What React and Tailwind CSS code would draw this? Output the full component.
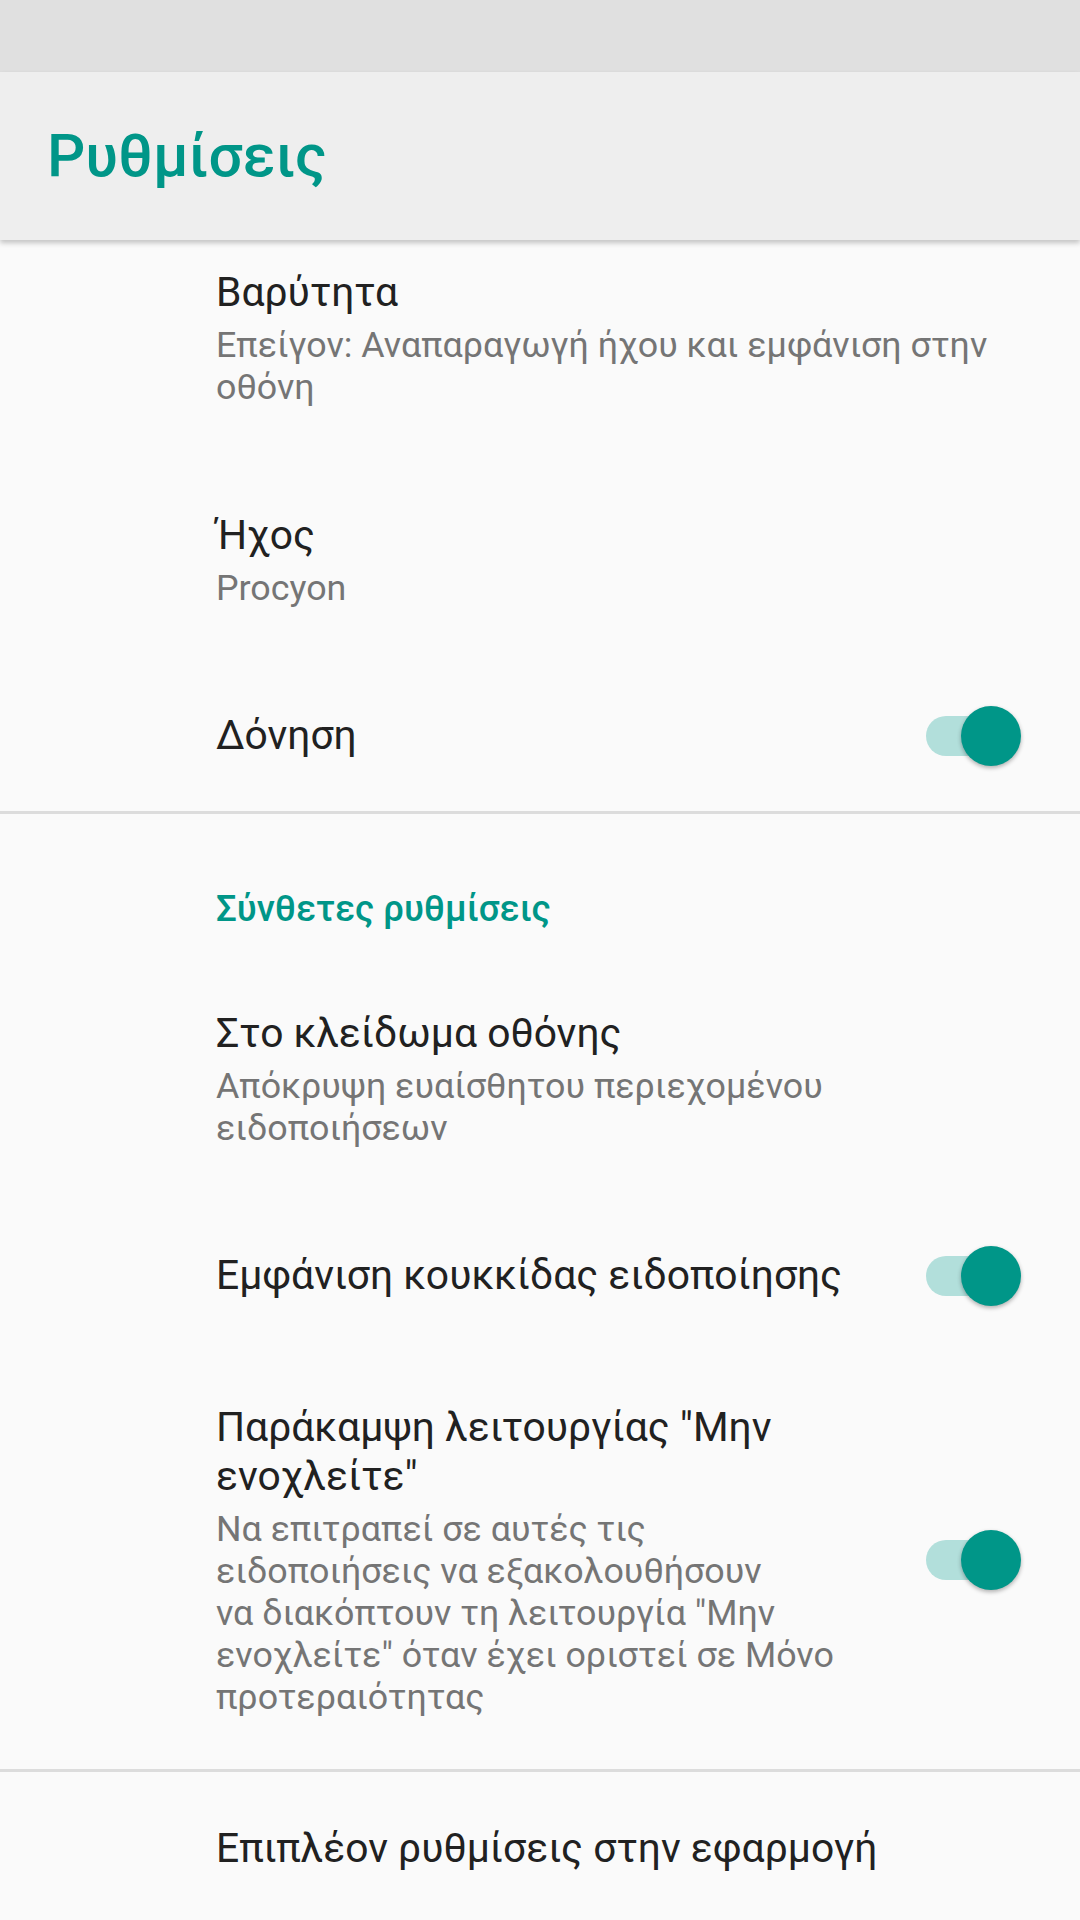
import React from 'react';

// Material switch, always "on" in this screen
const Toggle = () => (
    <div className="relative w-[95px] h-[60px] shrink-0">
        <div className="absolute left-0 top-[10px] w-[88px] h-[40px] rounded-full bg-[#b2dfdb]" />
        <div className="absolute right-0 top-0 w-[60px] h-[60px] rounded-full bg-[#009688] shadow-[0_2px_4px_rgba(0,0,0,0.3)]" />
    </div>
);

const Preference = ({ title, summary, toggle, first }) => (
    <div className="flex items-center pl-[216px] pr-[59px]">
        <div className={`flex-1 ${first ? 'pt-[28px] pb-[51.3px]' : 'py-[51.3px]'}`}>
            {title.map((line) => (
                <div key={line} className="text-[40.8px] leading-[49px] text-[#212121] whitespace-nowrap">
                    {line}
                </div>
            ))}
            {summary && (
                <div className="mt-[7px]">
                    {summary.map((line) => (
                        <div key={line} className="text-[35.8px] leading-[42px] text-[#757575] whitespace-nowrap">
                            {line}
                        </div>
                    ))}
                </div>
            )}
        </div>
        {toggle && <Toggle />}
    </div>
);

const Divider = () => <div className="h-[3px] bg-[#dcdcdc]" />;

const App = () => {
    return (
        <div className="h-[1920px] overflow-hidden bg-[#fafafa] font-[family-name:Roboto,sans-serif]">
            <div className="h-[72px] bg-[#e0e0e0]" />
            <header className="relative z-10 h-[168px] flex items-center pl-[47px] bg-[#eeeeee] shadow-[0_3px_5px_rgba(0,0,0,0.22)]">
                <h1 className="text-[60px] leading-none font-medium text-[#009688]">Ρυθμίσεις</h1>
            </header>

            <main>
                <Preference
                    first
                    title={['Βαρύτητα']}
                    summary={['Επείγον: Αναπαραγωγή ήχου και εμφάνιση στην', 'οθόνη']}
                />
                <Preference title={['Ήχος']} summary={['Procyon']} />
                <Preference title={['Δόνηση']} toggle />

                <Divider />

                <div className="pl-[216px] pt-[73px] pb-[27px] text-[36.5px] leading-[43px] font-medium text-[#009688]">
                    Σύνθετες ρυθμίσεις
                </div>

                <Preference
                    title={['Στο κλείδωμα οθόνης']}
                    summary={['Απόκρυψη ευαίσθητου περιεχομένου', 'ειδοποιήσεων']}
                />
                <Preference title={['Εμφάνιση κουκκίδας ειδοποίησης']} toggle />
                <Preference
                    title={['Παράκαμψη λειτουργίας "Μην', 'ενοχλείτε"']}
                    summary={[
                        'Να επιτραπεί σε αυτές τις',
                        'ειδοποιήσεις να εξακολουθήσουν',
                        'να διακόπτουν τη λειτουργία "Μην',
                        'ενοχλείτε" όταν έχει οριστεί σε Μόνο',
                        'προτεραιότητας',
                    ]}
                    toggle
                />

                <Divider />

                <Preference title={['Επιπλέον ρυθμίσεις στην εφαρμογή']} />
            </main>
        </div>
    );
};

export default App;
